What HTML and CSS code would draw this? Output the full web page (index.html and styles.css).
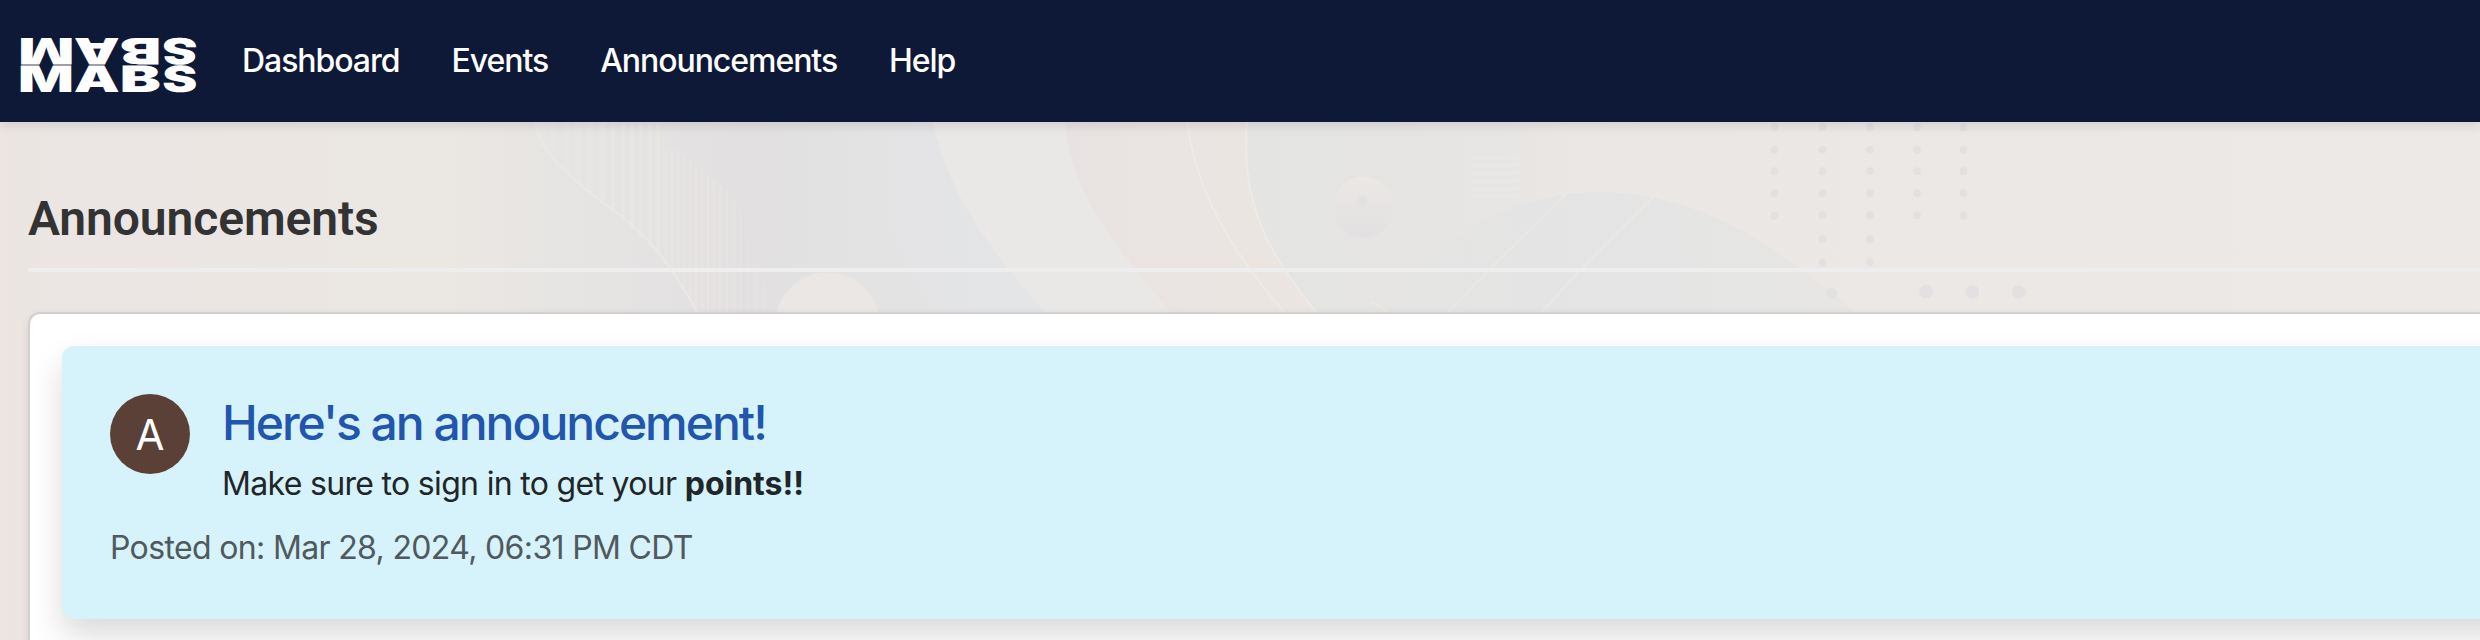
FILE: index.html
```html
<!DOCTYPE html>
<html lang="en">
<head>
<meta charset="utf-8">
<title>Announcements</title>
<link rel="stylesheet" href="styles.css">
</head>
<body>
<header class="navbar">
  <svg class="logo" width="180" height="60" viewBox="18 36 180 60" role="img" aria-label="MABS">
    <defs>
      <g id="m"><text transform="translate(18 92.300) scale(1.606 1)">M</text></g>
      <g id="a"><text transform="translate(73.800 92.300) scale(1.59 1)">A</text></g>
      <g id="b"><text transform="translate(119.800 92.300) scale(1.69 1)">B</text></g>
      <g id="s"><text transform="translate(162.200 92.300) scale(1.445 1)">S</text></g>
    </defs>
    <use href="#m"/><use href="#a"/><use href="#b"/><use href="#s"/>
    <use href="#m" transform="rotate(180 46.100 65)"/>
    <use href="#a" transform="rotate(180 96.800 65)"/>
    <use href="#b" transform="rotate(180 140.500 65)"/>
    <use href="#s" transform="rotate(180 179.800 65)"/>
  </svg>
  <nav class="links">
    <a class="link">Dashboard</a>
    <a class="link">Events</a>
    <a class="link">Announcements</a>
    <a class="link">Help</a>
  </nav>
</header>
<main class="page">
  <svg class="backdrop" width="2480" height="518" viewBox="0 122 2480 518" aria-hidden="true">
    <defs>
      <linearGradient id="base" gradientUnits="userSpaceOnUse" x1="0" y1="0" x2="2480" y2="0">
        <stop offset="0" stop-color="#ece5e2"/><stop offset=".02" stop-color="#ebe6e3"/>
        <stop offset=".18" stop-color="#ebe7e3"/><stop offset=".24" stop-color="#e5e4e3"/>
        <stop offset=".3" stop-color="#e2e0e1"/><stop offset=".35" stop-color="#e3e3e3"/>
        <stop offset=".5" stop-color="#e4e4e3"/><stop offset=".59" stop-color="#e6e5e4"/>
        <stop offset=".64" stop-color="#ebe7e4"/><stop offset="1" stop-color="#ede9e6"/>
      </linearGradient>
      <linearGradient id="hill" x1="0" y1="0" x2="1" y2="0">
        <stop offset="0" stop-color="#e4e3e3" stop-opacity="0"/><stop offset=".35" stop-color="#e4e4e4"/>
        <stop offset="1" stop-color="#e7e6e5"/>
      </linearGradient>
      <linearGradient id="ball" x1="0" y1="0" x2="0" y2="1">
        <stop offset="0" stop-color="#ebe8e5"/><stop offset="1" stop-color="#e2e0e1"/>
      </linearGradient>
      <linearGradient id="pink" x1="0" y1="0" x2="1" y2="0">
        <stop offset="0" stop-color="#e8e2e2"/><stop offset="1" stop-color="#ece6e2"/>
      </linearGradient>
      <linearGradient id="fade" x1="0" y1="0" x2="1" y2="0">
        <stop offset="0" stop-color="#e3e3e4"/><stop offset="1" stop-color="#e4e5e7"/>
      </linearGradient>
    </defs>
    <rect y="122" width="2480" height="518" fill="url(#base)"/>
    <g stroke="#e9e6e3" fill="none">
      <path stroke-width="6" opacity=".8" d="M542 122V145M554 122V160M566 122V172M578 122V183M590 122V192M602 122V201"/>
      <path stroke-width="4" opacity=".8" d="M613 122V211M623 122V220M632 122V229M641 122V238M650 122V247M658 122V255"/>
      <path stroke-width="2.500" opacity=".7" d="M666 150V264M672 150V271M678 150V280M684 155V290M690 160V300M696 165V312M702 170V312M708 175V312M714 180V312M720 185V312M727 190V312"/>
      <path stroke-width="2" opacity=".45" d="M734 200V312M741 210V312M748 240V312M756 265V312M764 285V312"/>
      <path stroke-width="2" stroke="#ece8e5" d="M535 122C540 145 552 165 605 204C640 229 665 252 697 312"/>
    </g>
    <circle cx="827.500" cy="325" r="52.500" fill="#ebe7e4"/>
    <path fill="url(#fade)" d="M857 122C868 195 900 265 937 312H1045C1000 262 949 200 933 122Z"/>
    <path fill="#eae8e6" d="M933 122C949 200 1000 262 1045 312H1171C1110 240 1071 190 1065 122Z"/>
    <path fill="url(#pink)" d="M1065 122C1071 190 1110 240 1171 312H1316C1270 255 1240 205 1247 122Z"/>
    <path fill="none" stroke="#edeae7" stroke-width="2" d="M1187 122C1197 190 1226 245 1284 312M1247 122C1240 205 1270 255 1316 312"/>
    <path fill="url(#hill)" d="M1370 312C1450 230 1520 192 1598 192C1690 192 1765 235 1855 312Z"/>
    <circle cx="1363.500" cy="207" r="30.500" fill="url(#ball)"/>
    <circle cx="1362" cy="202" r="6" fill="#e2e2e2"/>
    <path fill="none" stroke="#ebe8e5" stroke-width="2" d="M1448 312L1491 268L1570 190L1640 125M1542 312L1582 268L1655 195L1683 165M1370 302Q1380 305 1387 312"/>
    <path fill="none" stroke="#eae8e6" stroke-width="3" d="M1472 158H1523M1472 165H1523M1472 173H1523M1472 181H1523M1472 189H1523M1472 196H1523"/>
    <g fill="none" stroke="#e2e0e0" stroke-width="7.500" stroke-linecap="round">
      <path d="M1774.500 127v.5M1774.500 149.500v.5M1774.500 171v.5M1774.500 193v.5M1774.500 215.500v.5"/>
      <path d="M1822.500 127v.5M1822.500 149.500v.5M1822.500 171v.5M1822.500 193v.5M1822.500 215v.5M1822.500 239v.5M1822.500 262v.5"/>
      <path d="M1870 127v.5M1870 149.500v.5M1870 171v.5M1870 193v.5M1870 215v.5M1870 239v.5M1870 262v.5"/>
      <path d="M1917 127v.5M1917 149.500v.5M1917 171v.5M1917 193v.5M1917 215v.5"/>
      <path d="M1963.500 127v.5M1963.500 149.500v.5M1963.500 171v.5M1963.500 193v.5M1963.500 215.500v.5"/>
    </g>
    <g fill="#e2e0e0">
      <circle cx="1832" cy="293" r="5.300"/>
      <circle cx="1926" cy="291.500" r="6.800"/>
      <circle cx="1972.500" cy="292" r="6.800"/>
      <circle cx="2019" cy="292" r="6.800"/>
    </g>
  </svg>
  <div class="content">
    <h1 class="heading">Announcements</h1>
    <section class="panel">
      <article class="card">
        <div class="row">
          <div class="avatar">A</div>
          <div class="copy">
            <h2 class="title">Here's an announcement!</h2>
            <p class="text">Make sure to sign in to get your <strong class="strong">points!!</strong></p>
          </div>
        </div>
        <p class="posted">Posted on: Mar 28, 2024, 06:31 PM CDT</p>
      </article>
    </section>
  </div>
</main>
</body>
</html>
```
FILE: styles.css
```css
* { box-sizing: border-box; }
body {
  margin: 0;
  height: 640px;
  overflow: hidden;
  font-family: Inter, "Liberation Sans", sans-serif;
  font-size: 32px;
  color: #212529;
}
.navbar {
  position: relative;
  z-index: 1;
  display: flex;
  align-items: center;
  height: 122px;
  padding: 10px 0 0 18px;
  background: #0e1837;
  box-shadow: 0 4px 10px rgba(0, 0, 0, .1);
}
.logo {
  fill: #fff;
  font-weight: 900;
  font-size: 36.4px;
  text-rendering: geometricPrecision;
}
.links {
  display: flex;
  gap: 52px;
  padding: 0 0 10px 44px;
}
.link {
  color: #fff;
  font-weight: 450;
  line-height: 48px;
  letter-spacing: -1.05px;
  white-space: nowrap;
}
.page {
  position: relative;
  height: 518px;
  overflow: hidden;
}
.backdrop {
  position: absolute;
  inset: 0;
}
.content {
  position: relative;
  padding: 64px 0 0 28px;
}
.heading {
  margin: 0 0 40px;
  height: 86px;
  border-bottom: 4px solid #eee;
  font: 600 48px/66px Roboto, sans-serif;
  letter-spacing: -.1px;
  color: #333;
}
.panel {
  height: 400px;
  padding: 32px 0 0 32px;
  border: 2px solid #d0d0d0;
  border-right: 0;
  border-radius: 12px 0 0 0;
  background: #fff;
  box-shadow: 0 2px 8px rgba(0, 0, 0, .08);
}
.card {
  height: 273px;
  margin-right: -64px;
  padding: 48px;
  border-radius: 12px;
  background: #d6f3fb;
  box-shadow: 0 16px 32px rgba(0, 0, 0, .15);
}
.row {
  display: flex;
  gap: 32px;
  height: 125px;
}
.avatar {
  width: 80px;
  height: 80px;
  border-radius: 50%;
  background: #5a4037;
  color: #fff;
  font-size: 42px;
  line-height: 82px;
  text-align: center;
}
.title {
  margin: 0;
  font-size: 48px;
  font-weight: 500;
  line-height: 58px;
  letter-spacing: -2px;
  color: #2155ae;
}
.text {
  margin: 8px 0 0;
  line-height: 48px;
  letter-spacing: -.68px;
}
.strong {
  font-weight: 700;
  letter-spacing: 0;
}
.posted {
  margin: 5px 0 0;
  line-height: 48px;
  letter-spacing: -.65px;
  color: #50595d;
}
```
